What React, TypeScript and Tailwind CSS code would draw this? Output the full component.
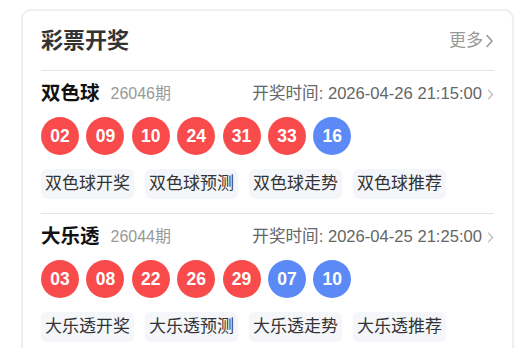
type Draw = {
  name: string;
  issue: string;
  time: string;
  red: string[];
  blue: string[];
  links: string[];
};

const draws: Draw[] = [
  {
    name: "双色球",
    issue: "26046期",
    time: "2026-04-26 21:15:00",
    red: ["02", "09", "10", "24", "31", "33"],
    blue: ["16"],
    links: ["双色球开奖", "双色球预测", "双色球走势", "双色球推荐"],
  },
  {
    name: "大乐透",
    issue: "26044期",
    time: "2026-04-25 21:25:00",
    red: ["03", "08", "22", "26", "29"],
    blue: ["07", "10"],
    links: ["大乐透开奖", "大乐透预测", "大乐透走势", "大乐透推荐"],
  },
];

function Chevron({ className }: { className: string }) {
  return (
    <svg viewBox="0 0 8 14" className={className} fill="none">
      <path d="M1.5 1.5 6.5 7l-5 5.5" stroke="currentColor" strokeWidth="1.6" strokeLinecap="round" strokeLinejoin="round" />
    </svg>
  );
}

function Ball({ value, blue }: { value: string; blue?: boolean }) {
  return (
    <span
      className={`grid size-[38px] place-items-center rounded-full text-[17.5px] font-bold text-white ${
        blue ? "bg-[#5b8af7]" : "bg-[#f94b4b]"
      }`}
    >
      {value}
    </span>
  );
}

function DrawBlock({ draw }: { draw: Draw }) {
  return (
    <section className="border-b border-[#e5e5e5] pb-[14px]">
      <div className="flex h-[46px] items-center">
        <h3 className="text-[19.5px] font-bold text-[#111]">{draw.name}</h3>
        <span className="ml-[11px] text-[16px] text-[#999]">{draw.issue}</span>
        <span className="ml-auto text-[16.6px] text-[#666]">开奖时间: {draw.time}</span>
        <Chevron className="ml-[5px] h-[11px] w-[7px] text-[#bbb]" />
      </div>
      <div className="flex gap-[7.4px]">
        {draw.red.map((n, i) => (
          <Ball key={`r${i}`} value={n} />
        ))}
        {draw.blue.map((n, i) => (
          <Ball key={`b${i}`} value={n} blue />
        ))}
      </div>
      <div className="mt-[14px] flex gap-[11px]">
        {draw.links.map((link) => (
          <span
            key={link}
            className="flex h-[30px] items-center rounded-[6px] bg-[#f5f6fa] px-[4px] text-[17px] text-[#333]"
          >
            {link}
          </span>
        ))}
      </div>
    </section>
  );
}

export default function App() {
  return (
    <div
      className="h-[348px] overflow-hidden bg-white pl-[21px] pr-[10px] pt-[9px]"
      style={{ fontFamily: '"Liberation Sans", "Noto Sans CJK SC", sans-serif' }}
    >
      <div className="h-[360px] rounded-[10px] border-2 border-[#efefef] px-[18px]">
        <header className="flex h-[60px] items-center justify-between border-b border-[#e5e5e5]">
          <h2 className="text-[22px] font-bold text-[#333]">彩票开奖</h2>
          <a className="flex items-center text-[17px] text-[#999]">
            更多
            <Chevron className="ml-[2px] h-[14px] w-[9px] text-[#999]" />
          </a>
        </header>
        {draws.map((draw) => (
          <DrawBlock key={draw.name} draw={draw} />
        ))}
      </div>
    </div>
  );
}
